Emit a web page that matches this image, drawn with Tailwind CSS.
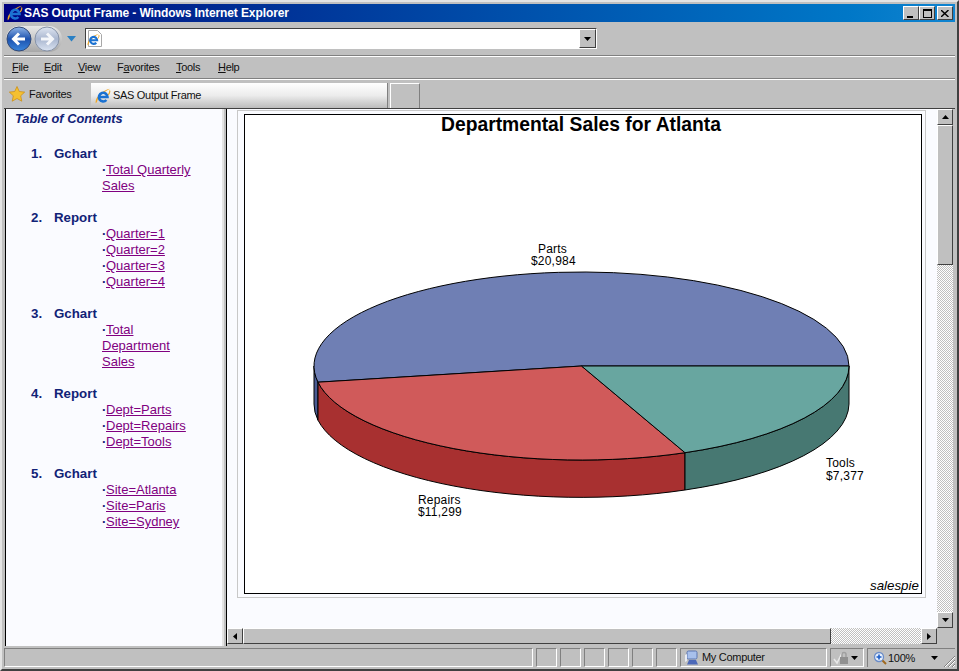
<!DOCTYPE html>
<html lang="en">
<head>
    <meta charset="UTF-8">
    <title>SAS Output Frame - Windows Internet Explorer</title>
    <script src="https://cdn.jsdelivr.net/npm/@tailwindcss/browser@4"></script>
</head>
<body class="m-0 overflow-hidden bg-[#c0c0c0] font-['Liberation_Sans',Arial,sans-serif]">

<svg class="hidden" width="0" height="0">
    <symbol id="ie" viewBox="0 0 16 16">
        <path d="M.8 15.200C-.6 11.500 5.500 2.600 15.200.800 10.500 3 4 8 2.800 11.500 2.300 13 2 14.500.8 15.200z" fill="#f0a828"/>
        <path d="M3.800 9h8.700a4.300 4.300 0 1 0-1.100 3" fill="none" stroke="#1b72d2" stroke-width="2.600"/>
        <path d="M14.500 2.500c.8 1.200-.2 3-1.200 4.500" fill="none" stroke="#f0a828" stroke-width="1.200"/>
    </symbol>
</svg>

<div class="flex h-[671px] w-[959px] flex-col border-2 border-t-[#e4e4e4] border-l-[#e4e4e4] border-r-[#404040] border-b-[#404040] p-[2px] text-black">

    <!-- title bar -->
    <div class="flex h-[18px] shrink-0 items-center bg-linear-to-r from-[#000080] to-[#1084d0] pr-[2px]">
        <svg class="ml-[3px] h-[16px] w-[16px]"><use href="#ie"/></svg>
        <span class="ml-[1px] text-[12px] font-bold tracking-[-0.1px] whitespace-nowrap text-white">SAS Output Frame - Windows Internet Explorer</span>
        <div class="ml-auto flex">
            <div class="flex h-[14px] w-[16px] items-end justify-start border border-t-white border-l-white border-r-[#404040] border-b-[#404040] bg-[#c0c0c0] pb-[1px] pl-[3px]"><div class="h-[2px] w-[6px] bg-black"></div></div>
            <div class="flex h-[14px] w-[16px] items-center justify-center border border-t-white border-l-white border-r-[#404040] border-b-[#404040] bg-[#c0c0c0]"><div class="h-[9px] w-[9px] border border-t-2 border-black"></div></div>
            <div class="ml-[2px] flex h-[14px] w-[16px] items-center justify-center border border-t-white border-l-white border-r-[#404040] border-b-[#404040] bg-[#c0c0c0]">
                <svg width="8" height="7" viewBox="0 0 8 7"><path d="M0 0l7.500 7M7.500 0L0 7" stroke="#000" stroke-width="1.400"/></svg>
            </div>
        </div>
    </div>

    <!-- address row -->
    <div class="flex h-[34px] shrink-0 items-center border-b border-[#808080] pl-[2px]">
        <div class="relative flex h-[26px] w-[56px] items-center rounded-full bg-linear-to-b from-[#e8e8e8] to-[#a8a8a8]">
            <svg width="26" height="26" viewBox="0 0 26 26" class="absolute left-0 top-0">
                <defs><linearGradient id="blueBtn" x1="0" y1="0" x2="0" y2="1"><stop offset="0" stop-color="#8fb4e8"/><stop offset=".5" stop-color="#1d52ae"/><stop offset="1" stop-color="#3a86dc"/></linearGradient></defs>
                <circle cx="13" cy="13" r="12" fill="url(#blueBtn)" stroke="#334a78"/>
                <path d="M19 13H8m5-5.500L7.500 13l5.500 5.500" fill="none" stroke="#fff" stroke-width="3"/>
            </svg>
            <svg width="26" height="26" viewBox="0 0 26 26" class="absolute left-[28px] top-0">
                <defs><linearGradient id="grayBtn" x1="0" y1="0" x2="0" y2="1"><stop offset="0" stop-color="#dfe6f2"/><stop offset=".5" stop-color="#a9b6cf"/><stop offset="1" stop-color="#dbe4f2"/></linearGradient></defs>
                <circle cx="13" cy="13" r="12" fill="url(#grayBtn)" stroke="#8793a8"/>
                <path d="M7 13h11m-5-5.500l5.500 5.500-5.500 5.500" fill="none" stroke="#f4f6fa" stroke-width="3"/>
            </svg>
        </div>
        <svg width="10" height="6" viewBox="0 0 10 6" class="ml-[5px]"><path d="M0 0h9L4.500 5.500z" fill="#2a80c4"/></svg>
        <div class="ml-[8px] flex h-[21px] w-[512px] items-center border border-t-[#404040] border-l-[#404040] border-r-white border-b-white bg-white">
            <div class="relative ml-[1px] h-[17px] w-[16px]">
                <svg width="14" height="17" viewBox="0 0 14 17" class="absolute left-[1px] top-0"><path d="M.5.500h9l4 4v12H.5z" fill="#fff" stroke="#a8a8a8"/></svg>
                <svg class="absolute left-0 top-[3px] h-[13px] w-[13px]"><use href="#ie"/></svg>
            </div>
            <div class="ml-auto flex h-[19px] w-[17px] items-center justify-center border border-t-white border-l-white border-r-[#404040] border-b-[#404040] bg-[#c0c0c0]">
                <svg width="7" height="4" viewBox="0 0 7 4"><path d="M0 0h7L3.500 4z"/></svg>
            </div>
        </div>
    </div>

    <!-- menu row -->
    <div class="flex h-[23px] shrink-0 items-center border-t border-b border-t-white border-b-[#808080] pl-[8px] text-[11px] tracking-[-0.3px] text-[#111]">
        <span class="w-[32px]"><u>F</u>ile</span>
        <span class="w-[34px]"><u>E</u>dit</span>
        <span class="w-[39px]"><u>V</u>iew</span>
        <span class="w-[59px]">F<u>a</u>vorites</span>
        <span class="w-[42px]"><u>T</u>ools</span>
        <span><u>H</u>elp</span>
    </div>

    <!-- favorites and tabs row -->
    <div class="flex h-[29px] shrink-0 border-t border-t-white text-[11px] tracking-[-0.3px] text-[#111]">
        <div class="flex w-[87px] items-center pl-[5px]">
            <svg width="16" height="16" viewBox="0 0 16 16"><path d="M8 .5l2.300 5 5.400.6-4 3.700 1.100 5.400L8 12.500l-4.800 2.700 1.100-5.400-4-3.700 5.400-.6z" fill="#f5c030" stroke="#c98a10" stroke-width=".7"/></svg>
            <span class="ml-[4px]">Favorites</span>
        </div>
        <div class="flex h-[25px] w-[297px] items-center self-end border-r border-[#808080] bg-linear-to-b from-white via-[#ececec] to-[#bcbcbc] pl-[4px]">
            <svg class="h-[16px] w-[16px]"><use href="#ie"/></svg>
            <span class="ml-[2px]">SAS Output Frame</span>
        </div>
        <div class="ml-[2px] h-[25px] w-[30px] self-end border border-b-0 border-l-white border-t-white border-r-[#808080]"></div>
    </div>

    <!-- frames -->
    <div class="flex min-h-0 flex-1 items-stretch border-t border-t-[#404040]">
        <nav class="ml-[1px] w-[219px] shrink-0 border-l border-l-black border-r-2 border-r-[#e4e4e4] bg-[#fafbff] text-[13.300px] leading-[16px] text-[#112277]">
            <div class="pl-[9px] pt-[2px] text-[12.800px] font-bold italic">Table of Contents</div>
            <div class="mt-[19px] flex flex-col gap-[16px] pl-[25px] font-bold">
                <div>
                    <div class="flex"><span class="w-[23px]">1.</span><span>Gchart</span></div>
                    <div class="box-content w-[92px] pl-[71px] text-[13px] font-normal text-[#800080]"><span class="inline-block w-[4px] font-bold text-[#112277]">·</span><a class="underline">Total Quarterly Sales</a></div>
                </div>
                <div>
                    <div class="flex"><span class="w-[23px]">2.</span><span>Report</span></div>
                    <div class="pl-[71px] text-[13px] font-normal text-[#800080]"><span class="inline-block w-[4px] font-bold text-[#112277]">·</span><a class="underline">Quarter=1</a></div>
                    <div class="pl-[71px] text-[13px] font-normal text-[#800080]"><span class="inline-block w-[4px] font-bold text-[#112277]">·</span><a class="underline">Quarter=2</a></div>
                    <div class="pl-[71px] text-[13px] font-normal text-[#800080]"><span class="inline-block w-[4px] font-bold text-[#112277]">·</span><a class="underline">Quarter=3</a></div>
                    <div class="pl-[71px] text-[13px] font-normal text-[#800080]"><span class="inline-block w-[4px] font-bold text-[#112277]">·</span><a class="underline">Quarter=4</a></div>
                </div>
                <div>
                    <div class="flex"><span class="w-[23px]">3.</span><span>Gchart</span></div>
                    <div class="box-content w-[75px] pl-[71px] text-[13px] font-normal text-[#800080]"><span class="inline-block w-[4px] font-bold text-[#112277]">·</span><a class="underline">Total Department Sales</a></div>
                </div>
                <div>
                    <div class="flex"><span class="w-[23px]">4.</span><span>Report</span></div>
                    <div class="pl-[71px] text-[13px] font-normal text-[#800080]"><span class="inline-block w-[4px] font-bold text-[#112277]">·</span><a class="underline">Dept=Parts</a></div>
                    <div class="pl-[71px] text-[13px] font-normal text-[#800080]"><span class="inline-block w-[4px] font-bold text-[#112277]">·</span><a class="underline">Dept=Repairs</a></div>
                    <div class="pl-[71px] text-[13px] font-normal text-[#800080]"><span class="inline-block w-[4px] font-bold text-[#112277]">·</span><a class="underline">Dept=Tools</a></div>
                </div>
                <div>
                    <div class="flex"><span class="w-[23px]">5.</span><span>Gchart</span></div>
                    <div class="pl-[71px] text-[13px] font-normal text-[#800080]"><span class="inline-block w-[4px] font-bold text-[#112277]">·</span><a class="underline">Site=Atlanta</a></div>
                    <div class="pl-[71px] text-[13px] font-normal text-[#800080]"><span class="inline-block w-[4px] font-bold text-[#112277]">·</span><a class="underline">Site=Paris</a></div>
                    <div class="pl-[71px] text-[13px] font-normal text-[#800080]"><span class="inline-block w-[4px] font-bold text-[#112277]">·</span><a class="underline">Site=Sydney</a></div>
                </div>
            </div>
        </nav>

        <div class="w-[2px] shrink-0 bg-[#c0c0c0]"></div>

        <!-- right frame -->
        <div class="flex min-w-0 flex-1 flex-col border-l border-l-black pb-[2px] pr-[2px]">
            <div class="flex min-h-0 flex-1">
                <div class="flex min-w-0 flex-1 flex-col bg-[#fafbff]">
                    <div class="flex min-h-0 flex-1 pl-[10px] pt-[1px]">
                        <div class="h-[488px] w-[689px] border border-[#c8c8c8] px-[6px] py-[3px]">
                            <div class="relative h-[480px] w-[678px] border border-black bg-white">
                                <div class="pr-[4px] text-center text-[19.300px] leading-[20px] font-bold">Departmental Sales for Atlanta</div>
                                <svg class="absolute left-[-1px] top-[-1px]" width="678" height="480" viewBox="244 114 678 480" font-family="Liberation Sans" font-size="12" fill="#000">
                                    <!-- sides -->
                                    <path d="M314 366 A267.500 94 0 0 0 318 382.200 V420.200 A267.500 94 0 0 1 314 404 Z" fill="#4b5c93" stroke="#000"/>
                                    <path d="M318 382.200 A267.500 94 0 0 0 685 452.700 V490 A267.500 94 0 0 1 318 420.200 Z" fill="#a83030" stroke="#000"/>
                                    <path d="M685 452.700 A267.500 94 0 0 0 849 366 V404 A267.500 94 0 0 1 685 490 Z" fill="#477872" stroke="#000"/>
                                    <!-- top slices -->
                                    <path d="M581.500 366 L318 382.200 A267.500 94 0 1 1 849 366 Z" fill="#6f7fb4" stroke="#000"/>
                                    <path d="M581.500 366 L685 452.700 A267.500 94 0 0 1 318 382.200 Z" fill="#d05a5a" stroke="#000"/>
                                    <path d="M581.500 366 L849 366 A267.500 94 0 0 1 685 452.700 Z" fill="#68a6a0" stroke="#000"/>
                                    <text x="538" y="253" letter-spacing=".2">Parts</text>
                                    <text x="531" y="265" letter-spacing=".2">$20,984</text>
                                    <text x="418" y="504" letter-spacing=".2">Repairs</text>
                                    <text x="418" y="516" letter-spacing=".2">$11,299</text>
                                    <text x="826" y="467" letter-spacing=".2">Tools</text>
                                    <text x="826" y="480" letter-spacing=".2">$7,377</text>
                                    <text x="870" y="590" font-size="13.300" font-style="italic">salespie</text>
                                </svg>
                            </div>
                        </div>
                    </div>
                </div>
                <!-- vertical scrollbar -->
                <div class="flex w-[16px] shrink-0 flex-col bg-[repeating-conic-gradient(#fff_0_25%,#c0c0c0_0_50%)] bg-[length:2px_2px]">
                    <div class="flex h-[16px] items-center justify-center border border-t-white border-l-white border-r-[#404040] border-b-[#404040] bg-[#c0c0c0]"><svg width="7" height="4" viewBox="0 0 7 4"><path d="M3.500 0L7 4H0z"/></svg></div>
                    <div class="h-[140px] border border-t-white border-l-white border-r-[#404040] border-b-[#404040] bg-[#c0c0c0]"></div>
                    <div class="mt-auto flex h-[16px] items-center justify-center border border-t-white border-l-white border-r-[#404040] border-b-[#404040] bg-[#c0c0c0]"><svg width="7" height="4" viewBox="0 0 7 4"><path d="M0 0h7L3.500 4z"/></svg></div>
                </div>
            </div>
            <!-- horizontal scrollbar -->
            <div class="flex h-[16px] shrink-0 pr-[16px]">
                <div class="flex min-w-0 flex-1 bg-[repeating-conic-gradient(#fff_0_25%,#c0c0c0_0_50%)] bg-[length:2px_2px]">
                    <div class="flex w-[16px] items-center justify-center border border-t-white border-l-white border-r-[#404040] border-b-[#404040] bg-[#c0c0c0]"><svg width="4" height="7" viewBox="0 0 4 7"><path d="M4 0v7L0 3.500z"/></svg></div>
                    <div class="w-[588px] border border-t-white border-l-white border-r-[#404040] border-b-[#404040] bg-[#c0c0c0]"></div>
                    <div class="ml-auto flex w-[16px] items-center justify-center border border-t-white border-l-white border-r-[#404040] border-b-[#404040] bg-[#c0c0c0]"><svg width="4" height="7" viewBox="0 0 4 7"><path d="M0 0v7l4-3.500z"/></svg></div>
                </div>
            </div>
        </div>
    </div>

    <!-- status bar -->
    <div class="flex h-[21px] shrink-0 items-stretch pt-[2px] text-[11px] tracking-[-0.3px] text-[#111]">
        <div class="w-[529px] border border-t-[#808080] border-l-[#808080] border-r-white border-b-white"></div>
        <div class="ml-[3px] w-[21px] border border-t-[#808080] border-l-[#808080] border-r-white border-b-white"></div>
        <div class="ml-[3px] w-[21px] border border-t-[#808080] border-l-[#808080] border-r-white border-b-white"></div>
        <div class="ml-[3px] w-[21px] border border-t-[#808080] border-l-[#808080] border-r-white border-b-white"></div>
        <div class="ml-[3px] w-[21px] border border-t-[#808080] border-l-[#808080] border-r-white border-b-white"></div>
        <div class="ml-[3px] w-[21px] border border-t-[#808080] border-l-[#808080] border-r-white border-b-white"></div>
        <div class="ml-[3px] w-[21px] border border-t-[#808080] border-l-[#808080] border-r-white border-b-white"></div>
        <div class="ml-[3px] flex w-[147px] items-center border border-t-[#808080] border-l-[#808080] border-r-white border-b-white pl-[3px]">
            <svg width="16" height="16" viewBox="0 0 16 16"><rect x="3" y="1" width="10" height="8" rx="1.500" fill="#a8c0ec" stroke="#5a74b0"/><path d="M5 10h7l2 4.500H3z" fill="#4c68b8"/><path d="M1 5l2-1v7l-2 1z" fill="#e8ecf4"/></svg>
            <span class="ml-[2px]">My Computer</span>
        </div>
        <div class="ml-[3px] flex w-[34px] items-center border border-t-[#808080] border-l-[#808080] border-r-white border-b-white pl-[2px]">
            <svg width="16" height="14" viewBox="0 0 16 14"><path d="M1 8l3 4 5-10" fill="none" stroke="#e8e8e8" stroke-width="1.500"/><rect x="7" y="6" width="8" height="7" fill="#909090"/><path d="M9 6V3.500a2 2 0 0 1 4 0V6" fill="none" stroke="#a0a0a0" stroke-width="1.500"/></svg>
            <svg class="ml-[2px]" width="7" height="4" viewBox="0 0 7 4"><path d="M0 0h7L3.500 4z"/></svg>
        </div>
        <div class="ml-[3px] flex flex-1 items-center border-t border-l border-t-[#808080] border-l-[#808080] pl-[5px]">
            <svg width="14" height="14" viewBox="0 0 14 14"><circle cx="6" cy="6" r="4.500" fill="#e8f0fc" stroke="#6a8cc8" stroke-width="1.300"/><path d="M3.500 6h5M6 3.500v5" stroke="#1a5cc8" stroke-width="1.600"/><path d="M9.500 9.500l3.500 3.500" stroke="#a06a20" stroke-width="2"/></svg>
            <span class="ml-[1px]">100%</span>
            <svg class="ml-[16px]" width="7" height="4" viewBox="0 0 7 4"><path d="M0 0h7L3.500 4z"/></svg>
            <svg class="ml-auto self-end" width="12" height="12" viewBox="0 0 12 12"><path d="M12 1L1 12M12 5L5 12M12 9L9 12" stroke="#808080"/><path d="M12 2L2 12M12 6L6 12M12 10L10 12" stroke="#fff"/></svg>
        </div>
    </div>
</div>

</body>
</html>
